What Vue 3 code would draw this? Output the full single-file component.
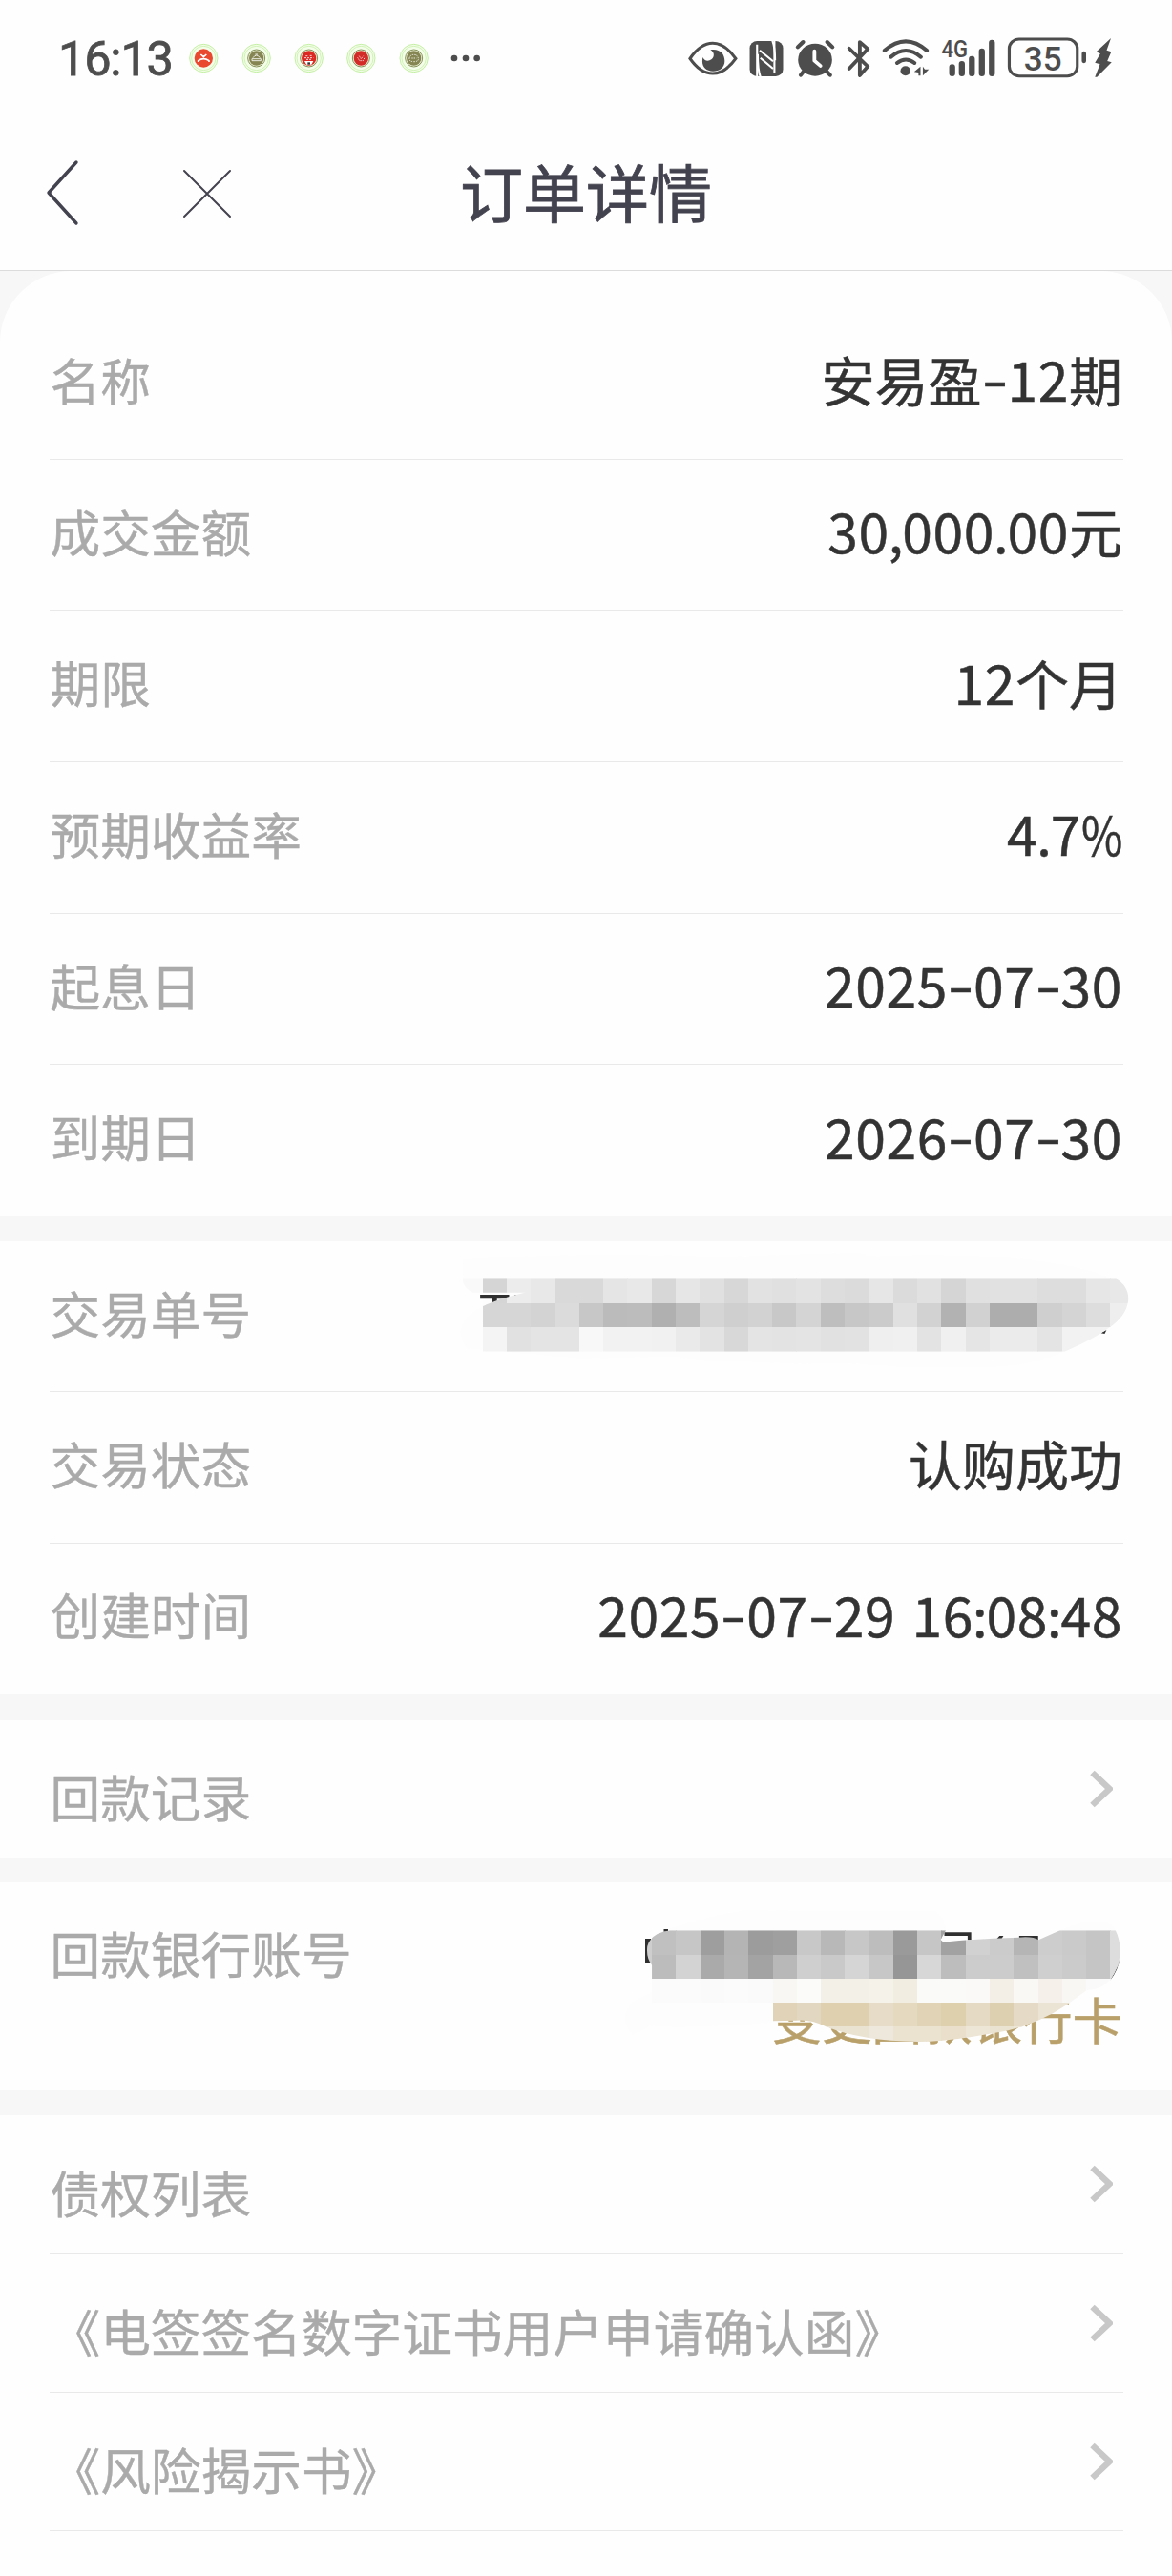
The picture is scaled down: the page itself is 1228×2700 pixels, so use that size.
<template>
  <div class="page">
    <!-- Status bar -->
    <div class="status-bar">
      <span class="clock">16:13</span>
      <svg class="notices" viewBox="0 0 990 165">
        <g v-for="n in notices" :key="n.x" :transform="`translate(${n.x} 78)`">
          <circle r="44" fill="#f4fdea" stroke="#c4f0a4" stroke-width="3" />
          <circle r="38" fill="none" stroke="#c9f1ab" stroke-width="2.5" />
          <circle v-if="n.ring" r="27" fill="#eef3d4" stroke="#85905a" stroke-width="3" />
          <circle :r="n.ring ? 23 : 29" :fill="n.color" />
          <path :d="n.glyph" fill="none" stroke="#fff" :stroke-width="n.ring ? 2.5 : 5" :stroke-dasharray="n.dash" />
          <path v-if="n.badge" d="M-14 9H14L8 20H-8Z" fill="#fff" />
          <rect v-if="n.badge" x="-4" y="13" width="8" height="7" fill="#333" />
        </g>
        <circle v-for="x in [858, 894, 929]" :key="x" :cx="x" cy="78" r="10" fill="#4d4d4d" />
      </svg>
      <svg class="indicators" viewBox="0 0 1568 240" preserveAspectRatio="none">
        <!-- Eye -->
        <path d="M123 124Q155 76 191 76T260 124Q228 171 191 171T123 124Z" fill="none" stroke="#4d4d4d" stroke-width="9" />
        <path d="M184 97C211 92 227 108 227 132C227 153 211 164 192 164C172 164 160 151 160 133L161 120C166 132 178 134 187 127C197 119 197 104 184 97Z" fill="#4d4d4d" />
        <!-- NFC -->
        <rect x="302" y="69" width="100" height="111" rx="22" fill="#4d4d4d" />
        <path d="M324 80V182M376 68V168" stroke="#fff" stroke-width="6" />
        <path d="M332 98L372 133M334 122L372 156M370 68Q378 90 378 130M326 110Q326 160 334 182" fill="none" stroke="#fff" stroke-width="6" />
        <!-- Alarm -->
        <circle cx="498" cy="128" r="51" fill="#4d4d4d" />
        <path d="M446 88L462 72M550 88L534 72M464 164L455 176M532 164L543 176" stroke="#4d4d4d" stroke-width="12" stroke-linecap="round" />
        <path d="M496 101V131L514 147" fill="none" stroke="#fff" stroke-width="11" stroke-linecap="round" stroke-linejoin="round" />
        <!-- Bluetooth -->
        <path d="M600 92L656 149L632 177V72L656 94L600 156" fill="none" stroke="#4d4d4d" stroke-width="11" stroke-linecap="round" stroke-linejoin="round" />
        <!-- Wi-Fi -->
        <g fill="none" stroke="#4d4d4d" stroke-width="12" stroke-linecap="round">
          <path d="M706 99Q770 41 833 99" />
          <path d="M725 119Q770 79 815 119" />
          <path d="M744 138Q770 117 796 138" />
        </g>
        <circle cx="769" cy="163" r="15" fill="#4d4d4d" />
        <path d="M795 166L814 149V178H808V168ZM821 149V178L839 158H827Z" fill="#4d4d4d" />
        <!-- Mobile signal -->
        <text x="877" y="121" class="net" textLength="79" lengthAdjust="spacingAndGlyphs">4G</text>
        <path d="M909 151V171M938 141V171M968 125V171M998 101V171M1028 74V171" stroke="#4d4d4d" stroke-width="18" stroke-linecap="round" />
        <!-- Battery -->
        <rect x="1080" y="63" width="204" height="116" rx="30" fill="none" stroke="#4d4d4d" stroke-width="9" />
        <path d="M1304 108V132" stroke="#4d4d4d" stroke-width="13" stroke-linecap="round" />
        <text x="1124" y="161" class="level" textLength="114" lengthAdjust="spacingAndGlyphs">35</text>
        <path d="M1385 60L1341 103L1353 109L1337 137L1352 142L1337 182H1343L1387 136L1374 132L1386 103L1372 98Z" fill="#4d4d4d" />
      </svg>
    </div>

    <!-- Navbar -->
    <header class="nav">
      <div class="nav-actions">
        <svg class="back" viewBox="0 0 36 70">
          <path d="M33 3L4 35L33 67" fill="none" stroke="#43424f" stroke-width="3.4" stroke-linecap="round" stroke-linejoin="round" />
        </svg>
        <svg class="close" viewBox="0 0 52 52">
          <path d="M2 2L50 50M50 2L2 50" stroke="#43424f" stroke-width="2" stroke-linecap="round" />
        </svg>
      </div>
      <h1>订单详情</h1>
      <div></div>
    </header>

    <main>
      <section class="card product">
        <div v-for="row in product" :key="row.label" class="row">
          <span class="label">{{ row.label }}</span>
          <span class="value"><span v-for="(part, i) in split(row.value)" :key="i" :class="kind(part)">{{ part }}</span></span>
        </div>
      </section>

      <section class="card trade">
        <div v-for="row in trade" :key="row.label" class="row">
          <span class="label">{{ row.label }}</span>
          <span v-if="row.value" class="value"><span v-for="(part, i) in split(row.value)" :key="i" :class="kind(part)">{{ part }}</span></span>
          <!-- Masked order number -->
          <svg v-else class="mask-order" viewBox="0 0 1568 450" preserveAspectRatio="none">
            <clipPath id="order-clip">
              <path d="M50 121H1448Q1474 142 1475 185Q1471 240 1430 278Q1400 310 1338 350H94V207Q130 182 184 164H72Q52 150 50 121Z" />
            </clipPath>
            <path d="M50 60Q300 35 600 52L900 38L920 50Q1300 30 1440 121H1338V350Q1250 400 1180 398H980Q860 380 780 389Q560 380 500 365L300 372L60 340Q20 260 94 207V164Q52 160 50 121Z" fill="#fdfdfd" />
            <path d="M88 171H150V184H124V196H114V184H88ZM162 171H170V175H162ZM1416 292L1428 282L1424 294Z" fill="#2f2f2f" />
            <g clip-path="url(#order-clip)" shape-rendering="crispEdges">
              <rect x="50" y="121" width="44" height="44" fill="#f9f9f9" />
              <rect v-for="t in orderTiles" :key="t.key" :x="t.x" :y="t.y" :width="t.w" :height="t.h" :fill="t.fill" />
            </g>
          </svg>
        </div>
      </section>

      <section class="card link">
        <div class="row link-row">
          <span class="label">回款记录</span>
          <svg class="chevron" viewBox="0 0 24 40"><path d="M2.5 3L20.5 20L2.5 37" /></svg>
        </div>
      </section>

      <section class="card bank">
        <span class="label">回款银行账号</span>
        <a class="change">变更回款银行卡</a>
        <!-- Masked bank account -->
        <svg class="mask-bank" viewBox="0 0 1568 600" preserveAspectRatio="none">
          <clipPath id="bank-clip">
            <path d="M115 357V240Q98 215 102 180Q112 138 165 130H936L922 158Q924 168 940 166Q1030 155 1140 152Q1180 148 1195 160L1255 130H1410Q1424 160 1423 200Q1420 250 1395 285Q1370 318 1330 318L1276 362Q1200 420 1110 445Q950 480 860 480Q700 478 600 432Q560 410 520 413L452 415V357Z" />
          </clipPath>
          <path d="M115 282V240L150 130Q280 80 384 66L590 70H900Q930 80 936 130H1255Q1380 70 1410 130L1330 318L452 357V420Q200 440 110 430L60 460Q20 400 60 355L130 315Z" fill="#fdfdfd" />
          <path d="M96 156H112V231H96ZM148 126H160V134H148ZM932 136H1007V160H997V147H932ZM1077 158L1086 147H1097L1091 158ZM1141 147H1194V160H1141ZM1395 287Q1418 255 1423 215L1417 240Z" fill="#2f2f2f" />
          <g clip-path="url(#bank-clip)" shape-rendering="crispEdges">
            <rect v-for="t in bankTiles" :key="t.key" :x="t.x" :y="t.y" :width="t.w" :height="t.h" :fill="t.fill" />
          </g>
        </svg>
      </section>

      <section class="card files">
        <div v-for="name in files" :key="name" class="row link-row">
          <span class="label">{{ name }}</span>
          <svg class="chevron" viewBox="0 0 24 40"><path d="M2.5 3L20.5 20L2.5 37" /></svg>
        </div>
      </section>
    </main>
  </div>
</template>

<script setup>
const notices = [
  { x: 70, color: '#e9492f', glyph: 'M-17 12V8Q0-4 17 8V12M-9-12L0-4L9-12' },
  { x: 236, color: '#858553', ring: true, glyph: 'M-14 8H14V2H-14ZM-11-1Q0-17 11-1M-4-12H4' },
  { x: 401, color: '#dc2722', ring: true, badge: true, glyph: 'M-14-1H14M-10-7H-2M3-8H12M-8 4H10', dash: '6 3' },
  { x: 565, color: '#d32b28', ring: true, glyph: 'M-11-2L-5 8H6L12-3M-6-7L0 2L7-7', dash: '4 3' },
  { x: 731, color: '#858553', ring: true, glyph: 'M-14 0Q-12-11 0-11T14 0T0 11T-14 0M-7 0H8', dash: '4 3' },
];

const product = [
  { label: '名称', value: '安易盈-12期' },
  { label: '成交金额', value: '30,000.00元' },
  { label: '期限', value: '12个月' },
  { label: '预期收益率', value: '4.7%' },
  { label: '起息日', value: '2025-07-30' },
  { label: '到期日', value: '2026-07-30' },
];

const trade = [
  { label: '交易单号' },
  { label: '交易状态', value: '认购成功' },
  { label: '创建时间', value: '2025-07-29 16:08:48' },
];

const files = ['债权列表', '《电签签名数字证书用户申请确认函》', '《风险揭示书》'];

// Chinese, digits and punctuation all have their own spacing
const kinds = { '-': 'dash', '.': 'point', ',': 'point', ':': 'point', '%': 'percent' };
const split = (value) => value.split(/([\u4e00-\u9fff]+|[-.,:%])/).filter(Boolean);
const kind = (part) => kinds[part] || (/[\u4e00-\u9fff]/.test(part) ? 'han' : 'latin');

const tiles = (rows, x0, w, y0, h) =>
  rows.flatMap((row, r) =>
    row.split(' ').map((c, i) => ({
      key: `${r}-${i}`,
      x: x0 + i * w,
      y: y0 + r * h,
      w: w + 0.5,
      h: h + 0.5,
      fill: c === '-' ? 'none' : `#${c.length === 2 ? c + c + c : c}`,
    }))
  );

const orderTiles = tiles(
  [
    'd5 ec e8 d9 d9 e5 e8 d7 e6 e0 d7 e2 e0 e3 dd db e6 db e1 d5 e0 e1 e1 dd dd e6 e8',
    'd6 d6 d3 db c7 bb bc b0 bd d5 cf d2 c8 d4 be c7 cb e0 d2 b2 d1 ad ad cf d4 dd ee',
    'f4 e1 e4 e4 f8 f2 f2 f1 ea e3 d8 e4 e3 e4 e1 e2 ef f0 e3 f0 e5 eb eb e4 f2 f2 -',
  ],
  93, 51.65, 121, 76.2
);

const bankTiles = [
  { key: 'edge', x: 96, y: 130, w: 20, h: 152, fill: '#cecece' },
  ...tiles(
    [
      'c0 c6 9e b4 9c 9f c8 b8 c7 bd 9a c6 a2 d1 cb b5 cd ca c5 dd',
      'bc d3 aa b5 a3 b8 cf c9 d5 c7 96 d7 bd cc cc c0 cf cb c5 dd',
      'fb fb fa fb fa f8f7f4 fbfbf9 f3f0e8 f3f0e8 f5f2ea f1ede1 fafaf8 fafaf8 faf9f7 f3efe6 f9f8f5 f5f1ea f8f7f4 fa fc',
      '- - - - - e0d3b7 e2d7c0 dfd1b0 dfd1b0 e7dcc8 e5d9c0 e1d4b6 dfd0ad e5dbc5 ddd0b0 e4dac5 ebe3d3 ebe3d3 ebe3d3',
      '- - - - - ebe3d2 ebe3d2 ebe3d2 ebe3d2 eee7db ebe2d0 ebe2d0 e9dfca ede5d6 ebe3d2 ede5d6 ede5d6 ede5d6',
    ],
    115, 67.4, 130, 75.8
  ),
];
</script>

<style>
body {
  background: #fefefe;
}
</style>

<style scoped>
.page {
  width: 1228px;
  height: 2700px;
  overflow: hidden;
  background: #fefefe;
  font-family: "Noto Sans CJK SC", sans-serif;
}

/* Status bar */
.status-bar {
  display: flex;
  align-items: center;
  height: 120px;
}
.clock {
  width: 129px;
  padding-left: 61px;
  font-family: Roboto, sans-serif;
  font-size: 50.5px;
  font-weight: 400;
  letter-spacing: -1.2px;
  line-height: 60px;
  padding-top: 4px;
  white-space: nowrap;
  color: #4d4d4d;
  -webkit-text-stroke: 0.8px #4d4d4d;
}
.notices {
  width: 330px;
  height: 55px;
  margin-top: 5px;
}
.indicators {
  width: 548px;
  height: 80px;
  margin-left: auto;
}
.net,
.level {
  font-family: Roboto, sans-serif;
  font-weight: 500;
  fill: #4d4d4d;
}
.net {
  font-size: 76px;
}
.level {
  font-size: 106px;
}

/* Navbar */
.nav {
  display: grid;
  grid-template-columns: 1fr auto 1fr;
  align-items: center;
  height: 163px;
  border-bottom: 1px solid #dcdcdc;
}
.nav-actions {
  display: flex;
  align-items: center;
  gap: 108px;
  padding-left: 47px;
}
.back {
  width: 36px;
  height: 70px;
}
.close {
  width: 52px;
  height: 52px;
  margin-top: 2px;
}
h1 {
  margin: -5px 0 0;
  font-size: 66px;
  font-weight: 400;
  line-height: 90px;
  color: #43424f;
  -webkit-text-stroke: 0.8px #43424f;
}

/* Cards */
main {
  display: flex;
  flex-direction: column;
  gap: 26px;
  background: #f7f7f7;
}
.card {
  box-sizing: border-box;
  display: flex;
  flex-direction: column;
  flex-shrink: 0;
  padding: 0 51px 0 52px;
  background: #fefefe;
}
.row {
  position: relative;
  display: flex;
  flex: 1;
  box-sizing: border-box;
  align-items: center;
  justify-content: space-between;
  border-bottom: 1px solid #e9e9e9;
}
.row:last-child {
  border-bottom-color: transparent;
}
.product {
  height: 991px;
  padding-top: 39px;
  border-radius: 75px 75px 0 0;
}
.trade {
  height: 475px;
}
.link {
  height: 144px;
  margin-top: 1px;
}
.bank {
  position: relative;
  height: 218px;
  padding-top: 39px;
}
.files {
  height: 483px;
}
.files .row {
  flex: none;
  height: 145.4px;
}
.files .row:last-child {
  border-bottom-color: #e9e9e9;
}

.label {
  font-size: 52.7px;
  line-height: 76px;
  color: #aaa;
  margin-top: -10px;
  margin-left: 0.5px;
  -webkit-text-stroke: 0.4px #aaa;
}
.link-row .label {
  margin-top: 15px;
}
.bank .label {
  margin-top: -4px;
}
.value {
  display: flex;
  align-items: baseline;
  font-size: 56px;
  line-height: 80px;
  white-space: pre;
  color: #333;
  margin-top: -10px;
  margin-right: 1px;
  -webkit-text-stroke: 0.5px #333;
}
.latin {
  font-size: 57px;
  letter-spacing: 0.6px;
  word-spacing: 4px;
}
.dash {
  width: 27px;
  text-align: center;
  transform: translateY(-2px) scaleX(1.4);
}
.point {
  display: flex;
  justify-content: center;
  width: 13.5px;
}
.percent {
  width: 43px;
  transform: scaleX(0.84);
  transform-origin: left;
}
.chevron {
  width: 24px;
  height: 40px;
  margin-right: 11px;
}
.chevron path {
  fill: none;
  stroke: #c8c8c8;
  stroke-width: 6.5;
}
.change {
  align-self: flex-end;
  margin-top: -4px;
  margin-right: 1px;
  font-size: 52.5px;
  line-height: 70px;
  color: #b9a06a;
  -webkit-text-stroke: 0.5px #b9a06a;
}

/* Mosaic lies over the private values */
.mask-order {
  position: absolute;
  top: -1px;
  right: -51px;
  width: 768px;
  height: 150px;
}
.mask-bank {
  position: absolute;
  top: 7px;
  right: 0;
  width: 588px;
  height: 200px;
}
</style>
